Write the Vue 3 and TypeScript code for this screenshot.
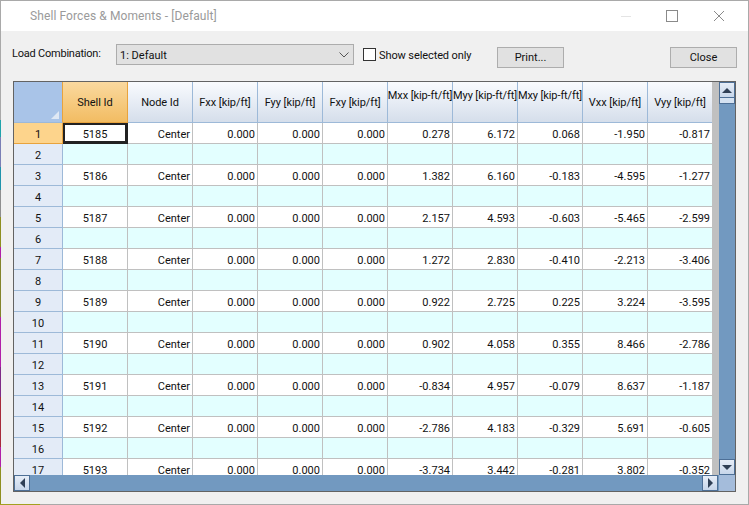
<script setup lang="ts">
interface Row { shell: string; values: string[] }
const columns = ['Node Id', 'Fxx [kip/ft]', 'Fyy [kip/ft]', 'Fxy [kip/ft]', 'Mxx [kip-ft/ft]', 'Myy [kip-ft/ft]', 'Mxy [kip-ft/ft]', 'Vxx [kip/ft]', 'Vyy [kip/ft]']
const data: Row[] = [
  { shell: '5185', values: ['0.278', '6.172', '0.068', '-1.950', '-0.817'] },
  { shell: '5186', values: ['1.382', '6.160', '-0.183', '-4.595', '-1.277'] },
  { shell: '5187', values: ['2.157', '4.593', '-0.603', '-5.465', '-2.599'] },
  { shell: '5188', values: ['1.272', '2.830', '-0.410', '-2.213', '-3.406'] },
  { shell: '5189', values: ['0.922', '2.725', '0.225', '3.224', '-3.595'] },
  { shell: '5190', values: ['0.902', '4.058', '0.355', '8.466', '-2.786'] },
  { shell: '5191', values: ['-0.834', '4.957', '-0.079', '8.637', '-1.187'] },
  { shell: '5192', values: ['-2.786', '4.183', '-0.329', '5.691', '-0.605'] },
  { shell: '5193', values: ['-3.734', '3.442', '-0.281', '3.802', '-0.352'] },
]
</script>

<template>
  <div class="window">
    <div class="desk-left"></div>
    <div class="desk-bottom"></div>
    <header class="titlebar">
      <span class="title">Shell Forces &amp; Moments - [Default]</span>
      <div class="controls">
        <span class="min"></span>
        <span class="max"></span>
        <svg class="close-x" width="12" height="12" viewBox="0 0 12 12"><path d="M1 1L11 11M11 1L1 11" stroke="#8a8a8a" fill="none" /></svg>
      </div>
    </header>
    <div class="toolbar">
      <label class="lc">Load Combination:</label>
      <div class="combo">
        <span>1: Default</span>
        <svg width="10" height="6" viewBox="0 0 10 6"><path d="M0.5 0.5L5 5L9.5 0.5" stroke="#555" fill="none" /></svg>
      </div>
      <span class="check"></span>
      <span class="show">Show selected only</span>
      <button class="btn print">Print...</button>
      <button class="btn close">Close</button>
    </div>
    <div class="grid-frame">
      <div class="grid-main">
        <div class="viewport">
          <div class="row head">
            <div class="corner"><i></i></div>
            <div class="hcell active">Shell Id</div>
            <div v-for="c in columns" :key="c" class="hcell" :class="{ tight: c.startsWith('M') }">{{ c }}</div>
          </div>
          <template v-for="(r, i) in data" :key="r.shell">
            <div class="row">
              <div class="rh" :class="{ current: i === 0 }">{{ i * 2 + 1 }}</div>
              <div class="cell ctr" :class="{ sel: i === 0 }">{{ r.shell }}</div>
              <div class="cell">Center</div>
              <div class="cell">0.000</div>
              <div class="cell">0.000</div>
              <div class="cell">0.000</div>
              <div v-for="(v, k) in r.values" :key="k" class="cell">{{ v }}</div>
            </div>
            <div v-if="i < 8" class="row alt">
              <div class="rh">{{ i * 2 + 2 }}</div>
              <div v-for="n in 10" :key="n" class="cell"></div>
            </div>
          </template>
        </div>
        <div class="strip"></div>
        <div class="vbar">
          <div class="sbtn up"><i></i></div>
          <div class="thumb"></div>
          <div class="track"></div>
          <div class="sbtn down"><i></i></div>
        </div>
      </div>
      <div class="hbar">
        <div class="sbtn left"><i></i></div>
        <div class="track"></div>
        <div class="sbtn right"><i></i></div>
        <div class="gap"></div>
        <div class="grip"></div>
      </div>
    </div>
  </div>
</template>

<style scoped>
.window {
  width: 749px;
  height: 505px;
  box-sizing: border-box;
  display: flex;
  flex-direction: column;
  position: relative;
  border: 1px solid #a9a9a9;
  background: #f0f0f0;
  font-family: Roboto, sans-serif;
  font-size: 11px;
  color: #111;
}
.desk-left {
  position: absolute;
  left: -1px;
  top: 119px;
  width: 1px;
  height: 385px;
  background: linear-gradient(
    #1fa3ab 0 17px, #7a7fb5 17px 47px, #1f93ab 47px 70px, #8e8e8e 70px 97px,
    #8f8f1f 97px 127px, #b01fa8 127px 138px, #83832a 138px 197px, #b01fa8 197px 247px,
    #7e2a86 247px 277px, #a82a3a 277px 327px, #b01fa8 327px 347px, #8f8f1f 347px
  );
}
.desk-bottom {
  position: absolute;
  left: -1px;
  bottom: -1px;
  width: 40px;
  height: 1px;
  background: #a3a01f;
}
.titlebar {
  height: 30px;
  flex: none;
  background: #fff;
  display: flex;
  align-items: center;
  padding-left: 29px;
}
.title { color: #9a9a9a; font-size: 12px; letter-spacing: 0.1px; }
.controls { margin-left: auto; display: flex; align-items: center; }
.min { width: 10px; height: 1px; background: #e4e4e4; margin-right: 35px; }
.max { width: 10px; height: 10px; border: 1px solid #8a8a8a; margin-right: 35px; }
.close-x { margin-right: 23px; }
.toolbar {
  height: 50px;
  flex: none;
  display: flex;
  align-items: flex-start;
  position: relative;
  padding-left: 11px;
}
.lc { margin-top: 16px; width: 104px; flex: none; letter-spacing: -0.22px; }
.combo {
  width: 238px;
  height: 21px;
  margin-top: 13px;
  box-sizing: border-box;
  flex: none;
  border: 1px solid #acacac;
  background: #e1e1e1;
  display: flex;
  align-items: center;
  justify-content: space-between;
  padding: 1px 4px 0 3px;
}
.check {
  width: 13px;
  height: 13px;
  box-sizing: border-box;
  border: 1px solid #333;
  background: #fff;
  margin: 17px 3px 0 9px;
  flex: none;
}
.show { margin-top: 18px; width: 118px; flex: none; letter-spacing: -0.1px; }
.btn {
  height: 21px;
  box-sizing: border-box;
  border: 1px solid #adadad;
  background: #e1e1e1;
  font: inherit;
  color: #111;
  padding: 0;
  margin-top: 16px;
  flex: none;
}
.print { width: 67px; }
.close { width: 67px; margin-left: 106px; }
.grid-frame {
  margin-left: 12px;
  width: 723px;
  height: 411px;
  box-sizing: border-box;
  border: 1px solid #636363;
  display: flex;
  flex-direction: column;
}
.grid-main { display: flex; flex: 1; min-height: 0; }
.viewport { width: 698px; overflow: hidden; background: #fff; flex: none; }
.strip { width: 7px; background: #c0c0c0; flex: none; }
.vbar { flex: 1; background: #7299c0; display: flex; flex-direction: column; }
.vbar .track { flex: 1; }
.row { display: flex; height: 21px; box-sizing: border-box; }
.row.head { height: 41px; }
.corner {
  width: 49px;
  flex: none;
  box-sizing: border-box;
  background: #a9c4e8;
  border-right: 1px solid #e8a33d;
  border-bottom: 1px solid #9db9d8;
  position: relative;
}
.corner i {
  position: absolute;
  right: 3px;
  bottom: 3px;
  width: 0;
  height: 0;
  border-left: 8px solid transparent;
  border-bottom: 8px solid #dfe8f4;
}
.hcell {
  width: 65px;
  flex: none;
  box-sizing: border-box;
  display: flex;
  align-items: center;
  justify-content: center;
  white-space: nowrap;
  background: linear-gradient(#f9fbfe, #d5deeb);
  border-right: 1px solid #9db9d8;
  border-bottom: 1px solid #9db9d8;
  letter-spacing: -0.05px;
}
.hcell.tight { align-items: flex-start; padding-top: 7px; letter-spacing: -0.1px; }
.hcell.active {
  background: linear-gradient(#fad99f, #f2bc62);
  border-right-color: #e8a33d;
  border-bottom-color: #e8a33d;
}
.rh {
  width: 49px;
  flex: none;
  box-sizing: border-box;
  background: #e3ebf7;
  border-right: 1px solid #9db9d8;
  border-bottom: 1px solid #9db9d8;
  display: flex;
  align-items: center;
  justify-content: center;
  padding-top: 2px;
}
.rh.current { background: #fdd48c; border-right-color: #e8a33d; border-bottom-color: #e8a33d; }
.cell {
  width: 65px;
  flex: none;
  box-sizing: border-box;
  border-right: 1px solid #c0c0c0;
  border-bottom: 1px solid #c0c0c0;
  display: flex;
  align-items: center;
  justify-content: flex-end;
  padding: 2px 2px 0 0;
}
.alt .cell { background: #e3ffff; }
.ctr { justify-content: center; padding-right: 0; }
.sel { box-shadow: inset 0 0 0 2px #222; border-color: #222; }
.sbtn {
  width: 16px;
  height: 16px;
  box-sizing: border-box;
  flex: none;
  background: linear-gradient(#e6edf7, #c7d6ea);
  border: 1px solid #4d6f96;
  display: flex;
  align-items: center;
  justify-content: center;
}
.sbtn i { width: 0; height: 0; display: block; }
.up i { border: 5px solid transparent; border-top: 0; border-bottom: 5px solid #2f3f55; }
.down i { border: 5px solid transparent; border-bottom: 0; border-top: 5px solid #2f3f55; }
.left i { border: 5px solid transparent; border-left: 0; border-right: 5px solid #2f3f55; }
.right i { border: 5px solid transparent; border-right: 0; border-left: 5px solid #2f3f55; }
.thumb { height: 6px; background: #d5e2f1; border: 1px solid #4d6f96; border-top: 0; box-sizing: border-box; width: 16px; }
.hbar { height: 16px; flex: none; display: flex; background: #7299c0; }
.hbar .track { flex: 1; }
.gap { width: 1px; flex: none; }
.grip { width: 16px; flex: none; background: #a4bcdb; }
</style>

<style>
html, body { margin: 0; background: #f0f0f0; }
</style>
